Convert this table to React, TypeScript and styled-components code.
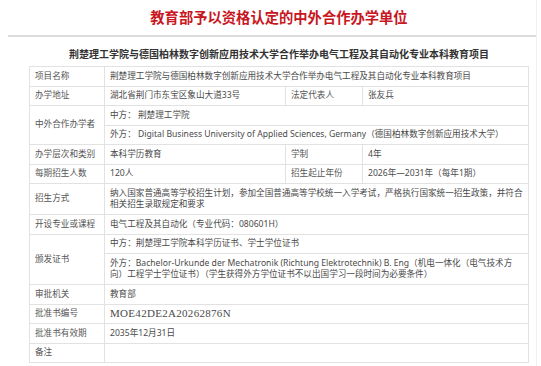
import styled, { createGlobalStyle } from "styled-components"

const GlobalStyle = createGlobalStyle`
    html, body {
        margin: 0;
        padding: 0;
        background: #fff;
    }
    body {
        font-family: "Noto Sans", "Noto Sans CJK SC", sans-serif;
        color: #444;
    }
`

const Page = styled.div`
    margin-left: 8px;
    width: 528px;
    min-height: 366px;
    border-right: 1px solid #f0f0f0;
`

const Heading = styled.h1`
    margin: 0;
    height: 35px;
    line-height: 33px;
    text-align: center;
    padding-left: 14px;
    font-family: "Noto Sans CJK SC", sans-serif;
    font-size: 14.3px;
    font-weight: bold;
    color: #c8161e;
`

const Divider = styled.div`
    height: 2px;
    background: #dcdcdc;
`

const Content = styled.div`
    padding: 10px 0 0 14px;
`

const SubTitle = styled.h2`
    margin: 0 0 6px;
    height: 13px;
    line-height: 13px;
    text-align: center;
    font-family: "Noto Sans CJK SC", sans-serif;
    font-size: 10px;
    font-weight: bold;
    color: #333;
`

const Table = styled.table`
    width: 499px;
    margin: 0 auto;
    border-collapse: collapse;
    table-layout: fixed;
    font-size: 8.6px;
`

const Cell = styled.td<{ $serif?: boolean }>`
    border: 1px solid #e2e2e2;
    padding: 3.5px 5px;
    line-height: 11.5px;
    vertical-align: middle;
    color: #4a4a4a;
    font-family: ${(p) => (p.$serif ? '"Liberation Serif", serif' : '"Noto Sans", "Noto Sans CJK SC", sans-serif')};
    font-size: ${(p) => (p.$serif ? "11px" : "8.6px")};
    letter-spacing: ${(p) => (p.$serif ? "0.3px" : "0")};
`

const Label = styled(Cell)`
    color: #555;
`

const Empty = styled(Cell)`
    height: 11.5px;
`

export default function App() {
    return (
        <>
            <GlobalStyle />
            <Page>
                <Heading>教育部予以资格认定的中外合作办学单位</Heading>
                <Divider />
                <Content>
                    <SubTitle>荆楚理工学院与德国柏林数字创新应用技术大学合作举办电气工程及其自动化专业本科教育项目</SubTitle>
                    <Table>
                        <colgroup>
                            <col style={{ width: 75 }} />
                            <col style={{ width: 181 }} />
                            <col style={{ width: 77 }} />
                            <col style={{ width: 166 }} />
                        </colgroup>
                        <tbody>
                            <tr>
                                <Label>项目名称</Label>
                                <Cell colSpan={3}>荆楚理工学院与德国柏林数字创新应用技术大学合作举办电气工程及其自动化专业本科教育项目</Cell>
                            </tr>
                            <tr>
                                <Label>办学地址</Label>
                                <Cell>湖北省荆门市东宝区象山大道33号</Cell>
                                <Label>法定代表人</Label>
                                <Cell>张友兵</Cell>
                            </tr>
                            <tr>
                                <Label rowSpan={2}>中外合作办学者</Label>
                                <Cell colSpan={3}>中方： 荆楚理工学院</Cell>
                            </tr>
                            <tr>
                                <Cell colSpan={3}>外方： Digital Business University of Applied Sciences, Germany（德国柏林数字创新应用技术大学）</Cell>
                            </tr>
                            <tr>
                                <Label>办学层次和类别</Label>
                                <Cell>本科学历教育</Cell>
                                <Label>学制</Label>
                                <Cell>4年</Cell>
                            </tr>
                            <tr>
                                <Label>每期招生人数</Label>
                                <Cell>120人</Cell>
                                <Label>招生起止年份</Label>
                                <Cell>2026年—2031年（每年1期）</Cell>
                            </tr>
                            <tr>
                                <Label>招生方式</Label>
                                <Cell colSpan={3}>纳入国家普通高等学校招生计划，参加全国普通高等学校统一入学考试，严格执行国家统一招生政策，并符合相关招生录取规定和要求</Cell>
                            </tr>
                            <tr>
                                <Label>开设专业或课程</Label>
                                <Cell colSpan={3}>电气工程及其自动化（专业代码：080601H）</Cell>
                            </tr>
                            <tr>
                                <Label rowSpan={2}>颁发证书</Label>
                                <Cell colSpan={3}>中方：荆楚理工学院本科学历证书、学士学位证书</Cell>
                            </tr>
                            <tr>
                                <Cell colSpan={3}>外方：Bachelor-Urkunde der Mechatronik (Richtung Elektrotechnik) B. Eng（机电一体化（电气技术方向）工程学士学位证书）（学生获得外方学位证书不以出国学习一段时间为必要条件）</Cell>
                            </tr>
                            <tr>
                                <Label>审批机关</Label>
                                <Cell colSpan={3}>教育部</Cell>
                            </tr>
                            <tr>
                                <Label>批准书编号</Label>
                                <Cell colSpan={3} $serif>MOE42DE2A20262876N</Cell>
                            </tr>
                            <tr>
                                <Label>批准书有效期</Label>
                                <Cell colSpan={3}>2035年12月31日</Cell>
                            </tr>
                            <tr>
                                <Label>备注</Label>
                                <Empty colSpan={3} />
                            </tr>
                        </tbody>
                    </Table>
                </Content>
            </Page>
        </>
    )
}
